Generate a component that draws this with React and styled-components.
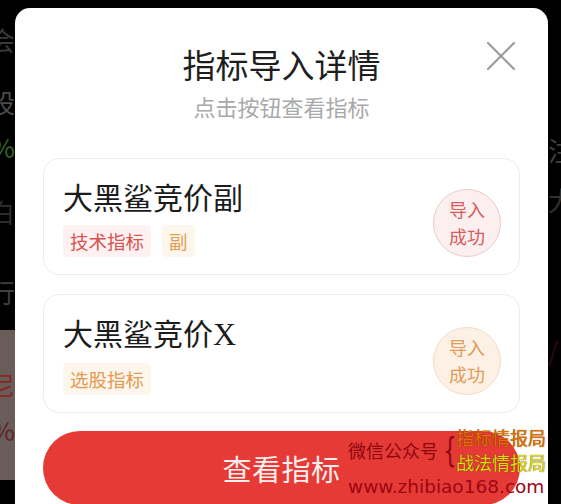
import styled, { createGlobalStyle } from "styled-components";

const GlobalStyle = createGlobalStyle`
  html, body {
    margin: 0;
    background: #000;
    overflow: hidden;
  }
  body {
    font-family: "Noto Sans CJK SC", "Noto Sans", sans-serif;
  }
`;

const Page = styled.div`
  position: relative;
  display: flex;
  height: 504px;
  overflow: hidden;
  background: #000;
`;

const SideStrip = styled.div`
  flex: ${({ grow }) => (grow ? 1 : "none")};
  width: ${({ width }) => width}px;
  display: flex;
  flex-direction: column;
  overflow: hidden;
`;

const StripBlock = styled.div`
  height: ${({ h }) => h}px;
  flex: none;
  background: ${({ bg }) => bg || "#000"};
  display: flex;
  flex-direction: column;
  align-items: ${({ align }) => align || "flex-end"};
`;

const Ghost = styled.span`
  margin-top: ${({ gap }) => gap}px;
  font-size: 26px;
  line-height: 30px;
  color: ${({ color }) => color || "#555"};
  white-space: nowrap;
  opacity: 0.85;
`;

const Modal = styled.div`
  position: relative;
  width: 533px;
  flex: none;
  margin-top: 8px;
  background: #fff;
  border-radius: 15px 15px 0 0;
  padding: 36px 28px 0;
  box-sizing: border-box;
`;

const Header = styled.div`
  display: flex;
  flex-direction: column;
  align-items: center;
  gap: 8px;
  margin-bottom: 38px;
`;

const Title = styled.h1`
  margin: 0;
  font-size: 33px;
  line-height: 40px;
  font-weight: 400;
  color: #1e1e1e;
`;

const Subtitle = styled.p`
  margin: 0;
  font-size: 22px;
  line-height: 28px;
  color: #a9a9a9;
`;

const CloseButton = styled.button`
  position: absolute;
  top: 33px;
  right: 32px;
  width: 30px;
  height: 30px;
  padding: 0;
  border: none;
  background: none;
  display: flex;
`;

const List = styled.div`
  display: flex;
  flex-direction: column;
  gap: 19px;
`;

const Card = styled.div`
  display: flex;
  justify-content: space-between;
  align-items: flex-end;
  padding: 18px 18px 17px 19px;
  border: 1px solid #ececec;
  border-radius: 16px;
`;

const CardInfo = styled.div`
  display: flex;
  flex-direction: column;
  gap: 10px;
`;

const CardName = styled.div`
  font-size: 30px;
  line-height: 38px;
  color: #1c1c1c;
`;

const Latin = styled.span`
  font-family: "Liberation Serif", serif;
  font-size: 32px;
`;

const Tags = styled.div`
  display: flex;
  gap: 11px;
`;

const tagColors = {
  red: { fg: "#d8524f", bg: "#fdf1f1" },
  orange: { fg: "#e59a52", bg: "#fdf6ec" },
};

const Tag = styled.span`
  height: 32px;
  padding: 0 7px;
  display: flex;
  align-items: center;
  font-size: 18.5px;
  border-radius: 4px;
  color: ${({ tone }) => tagColors[tone].fg};
  background: ${({ tone }) => tagColors[tone].bg};
`;

const stampColors = {
  red: { fg: "#d95c5b", bg: "#fcefef", line: "#ebc9c9" },
  orange: { fg: "#e29a58", bg: "#fdf1e6", line: "#f0dbc4" },
};

const Stamp = styled.div`
  width: 68px;
  height: 68px;
  flex: none;
  border-radius: 50%;
  box-sizing: border-box;
  display: flex;
  flex-direction: column;
  align-items: center;
  justify-content: center;
  font-size: 18px;
  line-height: 27px;
  color: ${({ tone }) => stampColors[tone].fg};
  background: ${({ tone }) => stampColors[tone].bg};
  border: 1px solid ${({ tone }) => stampColors[tone].line};
`;

const ViewButton = styled.button`
  margin-top: 18px;
  width: 100%;
  height: 74px;
  border: none;
  border-radius: 37px;
  background: #e53a35;
  color: #fdeeee;
  font-family: inherit;
  font-size: 29px;
  letter-spacing: 0.5px;
`;

const Watermark = styled.div`
  position: absolute;
  left: 348px;
  top: 425px;
  display: grid;
  grid-template-columns: 90px 12px auto;
  align-items: center;
  column-gap: 3px;
  pointer-events: none;
`;

const MarkLabel = styled.span`
  font-size: 18px;
  color: #8c0712;
  white-space: nowrap;
`;

const Brace = styled.span`
  font-family: "DejaVu Sans", sans-serif;
  font-size: 34px;
  line-height: 40px;
  color: #8c0712;
  text-align: center;
  transform: scaleX(0.6);
`;

const MarkLines = styled.div`
  display: flex;
  flex-direction: column;
`;

const MarkLine = styled.span`
  font-size: 18px;
  line-height: 25px;
  white-space: nowrap;
  color: ${({ color }) => color};
  text-shadow: 0 0 1px #5a2a00;
`;

const MarkUrl = styled.span`
  grid-column: 1 / -1;
  font-family: "DejaVu Sans", sans-serif;
  font-size: 18.5px;
  line-height: 24px;
  color: #9e0614;
  white-space: nowrap;
`;

const items = [
  {
    name: "大黑鲨竞价副",
    tags: [
      { text: "技术指标", tone: "red" },
      { text: "副", tone: "orange" },
    ],
    tone: "red",
  },
  {
    name: (
      <>
        大黑鲨竞价<Latin>X</Latin>
      </>
    ),
    tags: [{ text: "选股指标", tone: "orange" }],
    tone: "orange",
  },
];

function App() {
  return (
    <>
      <GlobalStyle />
      <Page>
        <SideStrip width={15}>
          <StripBlock h={330}>
            <Ghost gap={25} color="#444">会</Ghost>
            <Ghost gap={32} color="#5a5a5a">股</Ghost>
            <Ghost gap={15} color="#3d7a2a">%</Ghost>
            <Ghost gap={35} color="#333">白</Ghost>
            <Ghost gap={50} color="#4a4a4a">行</Ghost>
          </StripBlock>
          <StripBlock h={150} bg="#6a5c59">
            <Ghost gap={40} color="#8a1e1e">尼</Ghost>
            <Ghost gap={15} color="#5a1a1a">%</Ghost>
          </StripBlock>
        </SideStrip>
        <Modal>
          <Header>
            <Title>指标导入详情</Title>
            <Subtitle>点击按钮查看指标</Subtitle>
          </Header>
          <CloseButton aria-label="关闭">
            <svg width="30" height="30" viewBox="0 0 30 30">
              <path
                d="M2 2 L28 28 M28 2 L2 28"
                stroke="#9b9b9b"
                strokeWidth="2.2"
                strokeLinecap="round"
              />
            </svg>
          </CloseButton>
          <List>
            {items.map((item, i) => (
              <Card key={i}>
                <CardInfo>
                  <CardName>{item.name}</CardName>
                  <Tags>
                    {item.tags.map((t) => (
                      <Tag key={t.text} tone={t.tone}>
                        {t.text}
                      </Tag>
                    ))}
                  </Tags>
                </CardInfo>
                <Stamp tone={item.tone}>
                  <span>导入</span>
                  <span>成功</span>
                </Stamp>
              </Card>
            ))}
          </List>
          <ViewButton>查看指标</ViewButton>
        </Modal>
        <SideStrip grow>
          <StripBlock h={420} align="flex-start">
            <Ghost gap={135} color="#4a4a4a">注</Ghost>
            <Ghost gap={20} color="#3a3a3a">大</Ghost>
            <Ghost gap={120} color="#3a0a1a">/</Ghost>
          </StripBlock>
        </SideStrip>
        <Watermark>
          <MarkLabel>微信公众号</MarkLabel>
          <Brace>{"{"}</Brace>
          <MarkLines>
            <MarkLine color="#e07400">指标情报局</MarkLine>
            <MarkLine color="#d6dc10">战法情报局</MarkLine>
          </MarkLines>
          <MarkUrl>www.zhibiao168.com</MarkUrl>
        </Watermark>
      </Page>
    </>
  );
}

export default App;
